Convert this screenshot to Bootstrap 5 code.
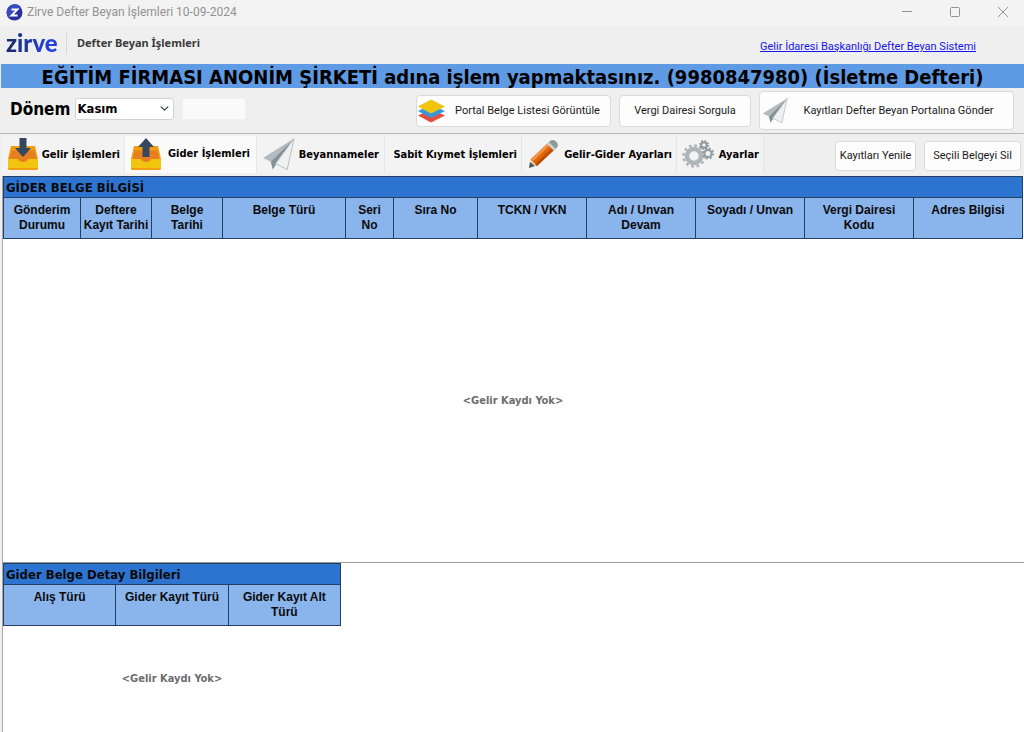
<!DOCTYPE html>
<html lang="tr">
<head>
<meta charset="utf-8">
<meta name="viewport" content="width=device-width, initial-scale=1">
<title>Zirve Defter Beyan İşlemleri</title>
<link href="https://cdn.jsdelivr.net/npm/bootstrap@5.3.0/dist/css/bootstrap.min.css" rel="stylesheet">
<style>
  body { font-family: Roboto, "Noto Sans", sans-serif; font-size: 12px; line-height: 16px; color: #111; background: #efefef; }
  .dj { font-family: "DejaVu Sans Condensed", "DejaVu Sans", sans-serif; font-weight: 700; }
  .title-bar { height: 26px; background: #f3f3f3; color: #929292; padding: 0 0 2px 6px; }
  .title-bar button { border: 0; background: none; width: 48px; padding: 0 0 0 6px; line-height: 0; }
  .title-bar button svg { display: block; margin: auto; }
  .brand-row { height: 38px; padding: 0 48px 4px 6px; }
  .brand-logo { width: 52px; font-family: Lato, sans-serif; font-weight: 900; font-size: 24px; line-height: 28px; color: transparent; background: linear-gradient(90deg, #182b66, #2341d8 80%); -webkit-background-clip: text; background-clip: text; }
  .brand-split { width: 1px; height: 21px; background: #d8d8d8; }
  .brand-name { color: #3b3b3b; font-family: "Noto Sans", sans-serif; font-weight: 700; font-size: 11px; padding-left: 2px; }
  .brand-row a { color: #1515f0; font-size: 11px; }
  .company { margin-left: 1px; height: 24px; background: #5f9ae4; font-size: 20px; line-height: 26px; color: #000; text-align: center; white-space: nowrap; overflow: hidden; }
  .period-row { height: 46px; padding: 0 10px; border-bottom: 1px solid #b9b9b9; }
  .period-row label { font-size: 17px; color: #000; margin-right: 5px; }
  .form-select.period { width: 99px; height: 22px; padding: 0 20px 0 1px; font-size: 13px; line-height: 20px; color: #000; border-radius: 3px; border-color: #d2d2d2; background-color: #fff; background-position: right 4px center; background-size: 9px 9px; }
  .form-control.period-note { width: 64px; height: 22px; padding: 0 4px; border-color: #f1f1f1; border-radius: 2px; background: #fafafa; }
  .tool { background: #fdfdfd; border: 1px solid #dadada; border-radius: 4px; color: #1b1b1b; font-size: 11px; line-height: 16px; height: 32px; padding: 0 8px; white-space: nowrap; display: flex; align-items: center; justify-content: center; }
  .tool:hover { background: #fff; border-color: #bbb; }
  .tool span { flex: 1; }
  .tool-list { width: 195px; padding: 0 0 0 1px; }
  .tool-query { width: 132px; }
  .tool-send { width: 255px; height: 39px; padding: 0 4px 0 2px; }
  .tool-refresh { width: 81px; height: 30px; padding: 0; }
  .tool-delete { width: 97px; height: 30px; padding: 0; }
  .tabs-row { height: 42px; padding: 1px 3px 3px 2px; }
  .tabs-row .nav-link { height: 37px; padding: 0 4px 0 5px; border: 0; border-right: 1px solid #e6e6e6; background: #f3f3f3; color: #000; font-size: 11px; display: flex; align-items: center; justify-content: space-between; white-space: nowrap; }
  .tabs-row .nav-link span { padding-top: 2px; }
  .tabs-row .nav-link.active { background: #fafafa; padding-right: 6px; }
  .tabs-row .nav-link.active span { padding-top: 0; }
  .t1 { width: 123px; } .t2 { width: 132px; } .t3 { width: 128px; } .t4 { width: 137px; } .t5 { width: 155px; } .t6 { width: 87px; }
  .tabs-row .t3 { padding-right: 5px; }
  .tabs-row .t4 { justify-content: flex-end; }
  .sheet { margin-left: 2px; padding-right: 1px; border-left: 1px solid #a9a9a9; background: #fff; }
  .sheet-main { flex: 16 0 0; }
  .sheet-detail { flex: 7 0 0; border-top: 1px solid #9a9a9a; }
  .grid { width: 100%; table-layout: fixed; border-collapse: collapse; }
  .grid th { border: 1px solid #243f63; background: #8ab4ec; color: #0a0a0a; font-family: "Liberation Sans", sans-serif; font-size: 12px; line-height: 15px; height: 40px; padding: 5px 1px; text-align: center; vertical-align: top; }
  .grid .grid-title { height: 21px; padding: 3px 2px 1px; background: #2d74d0; text-align: left; font-family: "DejaVu Sans Condensed", "DejaVu Sans", sans-serif; font-size: 13px; line-height: 16px; }
  .detail-box { width: 338px; }
  .no-record { color: #6d6d6d; font-size: 11px; }
  .c77 { width: 77px; } .c71 { width: 71px; } .c123 { width: 123px; } .c48 { width: 48px; } .c84 { width: 84px; }
</style>
</head>
<body class="d-flex flex-column min-vh-100">

<svg class="d-none" aria-hidden="true">
  <symbol id="plane" viewBox="0 0 34 34">
    <path d="M33 1 1 21l8 4z" fill="#b4bbbf"/>
    <path d="M33 1 9 25l2 8z" fill="#849095"/>
    <path d="M33 1 14 27l-3 6z" fill="#9da7ab"/>
    <path d="M33 1 14 27l12 6z" fill="#edf1f2" stroke="#b5bcc0"/>
  </symbol>
  <symbol id="tray" viewBox="0 0 32 34">
    <path d="M4 9h24l3 13H1z" fill="#f39c12"/>
    <path d="M4.500 13.500h23l2 9q-7 4-13.500 4T2.500 22.500z" fill="#e67e22"/>
    <path d="M1 22h10c1 4 9 4 10 0h10v9.500q0 1.500-2 1.500H3q-2 0-2-1.500z" fill="#f1c40f"/>
    <path d="M1 31h30q0 2-2 2H3q-2 0-2-2z" fill="#f39c12"/>
  </symbol>
</svg>

<header>
  <div class="title-bar d-flex align-items-center">
    <svg width="17" height="17" viewBox="0 0 17 17" aria-hidden="true"><circle cx="8.500" cy="8.500" r="8" fill="#2b2f9e"/><path d="M2 4a8 8 0 0 1 13-1L3 14A8 8 0 0 1 2 4" fill="#3949c4"/><path d="M5.500 5.500h6l-6 6h6" fill="none" stroke="#fff" stroke-width="1.800"/></svg>
    <span class="ms-1">Zirve Defter Beyan İşlemleri 10-09-2024</span>
    <div class="d-flex ms-auto">
      <button aria-label="Simge durumuna küçült"><svg width="12" height="12"><path d="M1 5.500h10" stroke="#929292"/></svg></button>
      <button aria-label="Ekranı kapla"><svg width="12" height="12"><rect x="1.500" y="1.500" width="9" height="9" rx="1" fill="none" stroke="#929292"/></svg></button>
      <button aria-label="Kapat"><svg width="12" height="12"><path d="m1 1 10 10M11 1 1 11" stroke="#929292"/></svg></button>
    </div>
  </div>
  <div class="brand-row d-flex align-items-center">
    <div class="brand-logo">zirve</div>
    <div class="brand-split ms-2"></div>
    <span class="brand-name ms-2">Defter Beyan İşlemleri</span>
    <a href="#" class="ms-auto mt-2">Gelir İdaresi Başkanlığı Defter Beyan Sistemi</a>
  </div>
  <div class="company dj">EĞİTİM FİRMASI ANONİM ŞİRKETİ adına işlem yapmaktasınız. (9980847980) (İsletme Defteri)</div>
</header>

<div class="period-row d-flex align-items-center">
  <div class="d-flex align-items-center mb-1">
    <label class="dj" for="period">Dönem</label>
    <select id="period" class="form-select period dj"><option>Kasım</option></select>
    <input class="form-control period-note ms-2" type="text" aria-label="Dönem açıklaması">
  </div>
  <div class="d-flex align-items-center gap-2 ms-auto">
    <button class="tool tool-list"><svg width="27" height="24" viewBox="0 0 27 24" aria-hidden="true"><path d="m0 16.500 13-6 14 6-14 7z" fill="#e74c3c"/><path d="m0 12 13-6 14 6-14 7z" fill="#3498db"/><path d="m0 7.500 13-7 14 7-14 7z" fill="#f1c40f"/></svg><span>Portal Belge Listesi Görüntüle</span></button>
    <button class="tool tool-query">Vergi Dairesi Sorgula</button>
    <button class="tool tool-send"><svg width="26" height="27" aria-hidden="true"><use href="#plane"/></svg><span>Kayıtları Defter Beyan Portalına Gönder</span></button>
  </div>
</div>

<div class="tabs-row d-flex align-items-center">
  <nav class="nav dj flex-nowrap">
    <a href="#" class="nav-link t1"><svg width="32" height="34" aria-hidden="true"><use href="#tray"/><path d="M12.500 1h7v10H24l-8 9-8-9h4.500z" fill="#34495e"/></svg><span>Gelir İşlemleri</span></a>
    <a href="#" class="nav-link active t2"><svg width="32" height="34" aria-hidden="true"><use href="#tray"/><path d="M12.500 20h7V10H24l-8-9-8 9h4.500z" fill="#34495e"/></svg><span>Gider İşlemleri</span></a>
    <a href="#" class="nav-link t3"><svg width="33" height="34" aria-hidden="true"><use href="#plane"/></svg><span>Beyannameler</span></a>
    <a href="#" class="nav-link t4"><span>Sabit Kıymet İşlemleri</span></a>
    <a href="#" class="nav-link t5"><svg width="32" height="30" viewBox="0 0 32 30" aria-hidden="true"><path d="m2 29 2-9 6 6z" fill="#e8dccb"/><path d="m2 29 1-6 5 4z" fill="#4b5860"/><path d="M3.500 20.500 21 4l6.500 6.500L10 27z" fill="#e0660c"/><path d="M3.500 20.500 21 4l2 2L5.500 22.700z" fill="#f29545"/><path d="m8 25 17.500-16.500 2 2L10 27z" fill="#bd4d05"/><path d="m21 4 2-2q3-2 6 .5t1 6l-2.500 2z" fill="#8d9a9c"/><path d="m20 5 2-2 6.500 6.500-2 2z" fill="#c9d0d1"/></svg><span>Gelir-Gider Ayarları</span></a>
    <a href="#" class="nav-link t6"><svg width="32" height="28" viewBox="0 0 32 28" aria-hidden="true"><g fill="none"><circle cx="12" cy="16" r="7" stroke="#adb5b8" stroke-width="4.500"/><circle cx="12" cy="16" r="10.500" stroke="#adb5b8" stroke-width="2.600" stroke-dasharray="2.750"/><circle cx="22" cy="5" r="2.800" stroke="#8c979b" stroke-width="2"/><circle cx="22" cy="5" r="4.300" stroke="#8c979b" stroke-width="1.500" stroke-dasharray="1.690"/><circle cx="26" cy="13.500" r="3.600" stroke="#929da1" stroke-width="2.200"/><circle cx="26" cy="13.500" r="5.300" stroke="#929da1" stroke-width="1.600" stroke-dasharray="2.080"/></g></svg><span>Ayarlar</span></a>
  </nav>
  <div class="d-flex gap-2 ms-auto mt-1">
    <button class="tool tool-refresh">Kayıtları Yenile</button>
    <button class="tool tool-delete">Seçili Belgeyi Sil</button>
  </div>
</div>

<main class="d-flex flex-column flex-grow-1">
  <section class="sheet sheet-main d-flex flex-column">
    <table class="grid">
      <colgroup><col class="c77"><col class="c71"><col class="c71"><col class="c123"><col class="c48"><col class="c84"><col><col><col><col><col></colgroup>
      <thead>
        <tr><th class="grid-title" colspan="11">GİDER BELGE BİLGİSİ</th></tr>
        <tr><th>Gönderim Durumu</th><th>Deftere Kayıt Tarihi</th><th>Belge<br>Tarihi</th><th>Belge Türü</th><th>Seri<br>No</th><th>Sıra No</th><th>TCKN / VKN</th><th>Adı / Unvan<br>Devam</th><th>Soyadı / Unvan</th><th>Vergi Dairesi<br>Kodu</th><th>Adres Bilgisi</th></tr>
      </thead>
    </table>
    <div class="no-record dj flex-grow-1 d-flex align-items-center justify-content-center">&lt;Gelir Kaydı Yok&gt;</div>
  </section>
  <section class="sheet sheet-detail d-flex flex-column">
    <div class="detail-box flex-grow-1 d-flex flex-column">
      <table class="grid">
        <thead>
          <tr><th class="grid-title" colspan="3">Gider Belge Detay Bilgileri</th></tr>
          <tr><th>Alış Türü</th><th>Gider Kayıt Türü</th><th>Gider Kayıt Alt<br>Türü</th></tr>
        </thead>
      </table>
      <div class="no-record dj flex-grow-1 d-flex align-items-center justify-content-center">&lt;Gelir Kaydı Yok&gt;</div>
    </div>
  </section>
</main>

<script src="https://cdn.jsdelivr.net/npm/bootstrap@5.3.0/dist/js/bootstrap.bundle.min.js"></script>
</body>
</html>
